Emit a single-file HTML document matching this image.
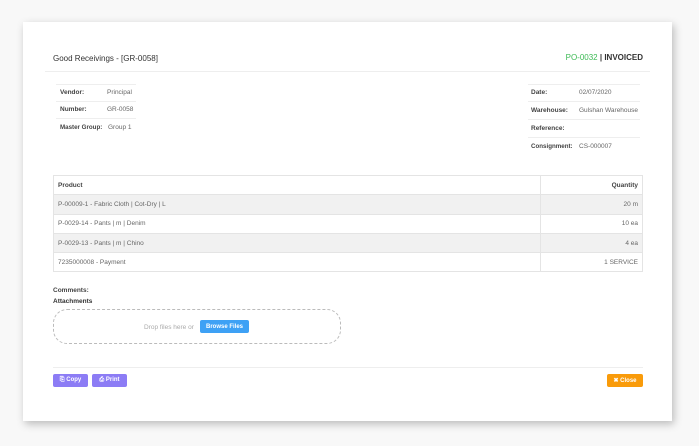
<!DOCTYPE html>
<html><head><style>
body{margin:0;width:699px;height:446px;background:#f8f8f8;font-family:"Liberation Sans",sans-serif;position:relative;overflow:hidden}
.card{position:absolute;left:23px;top:22px;width:649px;height:399px;background:#fff;box-shadow:2px 3px 8px rgba(0,0,0,.25)}
.a{position:absolute;font-size:6.5px;color:#666;white-space:nowrap}
.b{font-weight:bold;color:#444}
.hl{position:absolute;height:1px;background:#eee}
table{position:absolute;left:53px;top:175px;width:590px;border-collapse:collapse;font-size:6.5px;color:#666}
td{border:1px solid #e4e4e4;padding:0 4px;height:19.3px;box-sizing:border-box}
td:last-child{text-align:right;width:102px}
tr.g td{background:#f1f1f1}
.btn{position:absolute;height:13px;border-radius:2px;color:#fff;font-size:6px;font-weight:bold;display:flex;align-items:center;justify-content:center}
</style></head><body>
<div class="card"></div>
<div class="a" style="left:53px;top:54px;font-size:8px;color:#333">Good Receivings - [GR-0058]</div>
<div class="a b" style="right:56px;top:53px;font-size:8px;color:#333"><span style="color:#3cba54;font-weight:normal">PO-0032</span> | INVOICED</div>
<div class="hl" style="left:45px;top:71px;width:605px"></div>
<div class="hl" style="left:56px;top:84px;width:80px"></div>
<div class="hl" style="left:56px;top:101px;width:80px"></div>
<div class="hl" style="left:56px;top:118px;width:80px"></div>
<div class="a b" style="left:60px;top:89px">Vendor:</div><div class="a" style="left:107px;top:89px">Principal</div>
<div class="a b" style="left:60px;top:106px">Number:</div><div class="a" style="left:107px;top:106px">GR-0058</div>
<div class="a b" style="left:60px;top:124px;font-size:6.2px">Master Group:</div><div class="a" style="left:108px;top:124px">Group 1</div>
<div class="hl" style="left:528px;top:84px;width:112px"></div>
<div class="hl" style="left:528px;top:101px;width:112px"></div>
<div class="hl" style="left:528px;top:119px;width:112px"></div>
<div class="hl" style="left:528px;top:137px;width:112px"></div>
<div class="a b" style="left:531px;top:89px">Date:</div><div class="a" style="left:579px;top:89px">02/07/2020</div>
<div class="a b" style="left:531px;top:107px">Warehouse:</div><div class="a" style="left:579px;top:107px">Gulshan Warehouse</div>
<div class="a b" style="left:531px;top:125px">Reference:</div>
<div class="a b" style="left:531px;top:143px;font-size:6.2px">Consignment:</div><div class="a" style="left:579px;top:143px">CS-000007</div>
<table>
<tr><td style="font-weight:bold;color:#444">Product</td><td style="font-weight:bold;color:#444">Quantity</td></tr>
<tr class="g"><td>P-00009-1 - Fabric Cloth | Cot-Dry | L</td><td>20 m</td></tr>
<tr><td>P-0029-14 - Pants | m | Denim</td><td>10 ea</td></tr>
<tr class="g"><td>P-0029-13 - Pants | m | Chino</td><td>4 ea</td></tr>
<tr><td>7235000008 - Payment</td><td>1 SERVICE</td></tr>
</table>
<div class="a b" style="left:53px;top:287px">Comments:</div>
<div class="a b" style="left:53px;top:298px;color:#333">Attachments</div>
<div style="position:absolute;left:53px;top:309px;width:286px;height:33px;border:1px dashed #bbb;border-radius:14px"></div>
<div class="a" style="left:144px;top:324px;color:#aaa">Drop files here or</div>
<div class="btn" style="left:200px;top:320px;width:49px;background:#3ea1f5">Browse Files</div>
<div class="hl" style="left:53px;top:367px;width:590px"></div>
<div class="btn" style="left:53px;top:374px;width:35px;background:#8c7cf5">⎘ Copy</div>
<div class="btn" style="left:92px;top:374px;width:35px;background:#8c7cf5">⎙ Print</div>
<div class="btn" style="left:607px;top:374px;width:36px;background:#f99b0a">✖ Close</div>
</body></html>
